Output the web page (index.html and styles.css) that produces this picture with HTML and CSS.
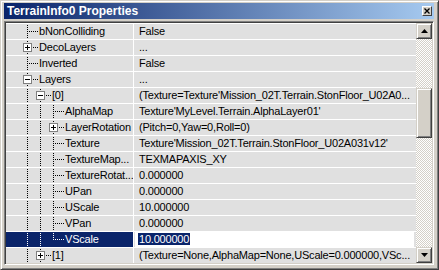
FILE: index.html
```html
<!DOCTYPE html>
<html lang="en">
<head>
    <meta charset="UTF-8">
    <title>TerrainInfo0 Properties</title>
    <link rel="stylesheet" href="styles.css">
</head>
<body>
    <div class="window">
        <div class="titlebar">
            <span class="title">TerrainInfo0 Properties</span>
            <span class="close"><svg width="6" height="6" viewBox="0 0 6 6"><path d="M0.5 0.5l5 5M5.5 0.5l-5 5" stroke="#000" stroke-width="1.3"/></svg></span>
        </div>
        <div class="frame">
            <div class="grid">
                <div class="row">
                    <div class="name"><span class="g conn tee"></span><span class="label">bNonColliding</span></div>
                    <div class="value">False</div>
                </div>
                <div class="row">
                    <div class="name"><span class="g conn tee"><span class="box plus"></span></span><span class="label">DecoLayers</span></div>
                    <div class="value">...</div>
                </div>
                <div class="row">
                    <div class="name"><span class="g conn tee"></span><span class="label">Inverted</span></div>
                    <div class="value">False</div>
                </div>
                <div class="row">
                    <div class="name"><span class="g conn tee"><span class="box"></span></span><span class="label">Layers</span></div>
                    <div class="value">...</div>
                </div>
                <div class="row">
                    <div class="name"><span class="g pipe"></span><span class="g conn tee"><span class="box"></span></span><span class="label">[0]</span></div>
                    <div class="value">(Texture=Texture'Mission_02T.Terrain.StonFloor_U02A0...</div>
                </div>
                <div class="row">
                    <div class="name"><span class="g pipe"></span><span class="g pipe"></span><span class="g conn tee"></span><span class="label">AlphaMap</span></div>
                    <div class="value">Texture'MyLevel.Terrain.AlphaLayer01'</div>
                </div>
                <div class="row">
                    <div class="name"><span class="g pipe"></span><span class="g pipe"></span><span class="g conn tee"><span class="box plus"></span></span><span class="label">LayerRotation</span></div>
                    <div class="value">(Pitch=0,Yaw=0,Roll=0)</div>
                </div>
                <div class="row">
                    <div class="name"><span class="g pipe"></span><span class="g pipe"></span><span class="g conn tee"></span><span class="label">Texture</span></div>
                    <div class="value">Texture'Mission_02T.Terrain.StonFloor_U02A031v12'</div>
                </div>
                <div class="row">
                    <div class="name"><span class="g pipe"></span><span class="g pipe"></span><span class="g conn tee"></span><span class="label">TextureMap...</span></div>
                    <div class="value">TEXMAPAXIS_XY</div>
                </div>
                <div class="row">
                    <div class="name"><span class="g pipe"></span><span class="g pipe"></span><span class="g conn tee"></span><span class="label">TextureRotat...</span></div>
                    <div class="value">0.000000</div>
                </div>
                <div class="row">
                    <div class="name"><span class="g pipe"></span><span class="g pipe"></span><span class="g conn tee"></span><span class="label">UPan</span></div>
                    <div class="value">0.000000</div>
                </div>
                <div class="row">
                    <div class="name"><span class="g pipe"></span><span class="g pipe"></span><span class="g conn tee"></span><span class="label">UScale</span></div>
                    <div class="value">10.000000</div>
                </div>
                <div class="row">
                    <div class="name"><span class="g pipe"></span><span class="g pipe"></span><span class="g conn tee"></span><span class="label">VPan</span></div>
                    <div class="value">0.000000</div>
                </div>
                <div class="row sel">
                    <div class="name"><span class="g pipe"></span><span class="g pipe"></span><span class="g conn end"></span><span class="label">VScale</span></div>
                    <div class="value"><span class="edit"><span class="hl">10.000000</span></span></div>
                </div>
                <div class="row">
                    <div class="name"><span class="g pipe"></span><span class="g conn tee"><span class="box plus"></span></span><span class="label">[1]</span></div>
                    <div class="value">(Texture=None,AlphaMap=None,UScale=0.000000,VSc...</div>
                </div>
            </div>
            <div class="scrollbar">
                <div class="sb-btn"><svg width="7" height="4" viewBox="0 0 7 4"><path d="M3.5 0L7 4H0z"/></svg></div>
                <div class="track top"></div>
                <div class="thumb"></div>
                <div class="track rest"></div>
                <div class="sb-btn"><svg width="7" height="4" viewBox="0 0 7 4"><path d="M0 0h7L3.5 4z"/></svg></div>
            </div>
        </div>
    </div>
</body>
</html>
```

FILE: styles.css
```css
body {
    margin: 0;
    background-color: #d4d0c8;
    font-family: "Liberation Sans", Arial, sans-serif;
    font-size: 11px;
    color: #000;
}
.window {
    width: 439px;
    height: 270px;
    box-sizing: border-box;
    border: 1px solid;
    border-color: #d4d0c8 #404040 #404040 #d4d0c8;
    box-shadow: inset 1px 1px #fff, inset -1px -1px #808080;
    padding: 2px 4px 4px 3px;
    background-color: #d4d0c8;
}
.titlebar {
    height: 16px;
    margin-bottom: 2px;
    padding-left: 3px;
    display: flex;
    align-items: center;
    background: linear-gradient(to right, #0a246a, #a6caf0);
}
.title {
    flex: 1;
    color: #fff;
    font-weight: bold;
    font-size: 12px;
    line-height: 16px;
    white-space: nowrap;
}
.close {
    width: 10px;
    height: 10px;
    box-sizing: border-box;
    margin-right: 2px;
    display: flex;
    align-items: center;
    justify-content: center;
    background-color: #d4d0c8;
    border: 1px solid;
    border-color: #fff #404040 #404040 #fff;
}
.frame {
    height: 244px;
    box-sizing: border-box;
    display: flex;
    padding: 1px;
    border: 1px solid;
    border-color: #808080 #fff #fff #808080;
    box-shadow: inset 1px 1px #404040, inset -1px -1px #d4d0c8;
}
.grid {
    width: 410px;
}
.row {
    display: flex;
    height: 16px;
    letter-spacing: -0.2px;
}
.name {
    --ln: #000;
    width: 128px;
    box-sizing: border-box;
    padding-left: 15px;
    display: flex;
    align-items: flex-start;
    border-top: 1px solid #fff;
    border-right: 1px solid #fff;
    background-color: #e0e0e0;
    white-space: nowrap;
    overflow: hidden;
}
.value {
    flex: 1;
    padding-left: 5px;
    line-height: 15px;
    border-top: 1px solid #fff;
    background-color: #e0e0e0;
    white-space: nowrap;
    overflow: hidden;
}
.label {
    line-height: 15px;
}

/* tree guides */
.g {
    display: block;
    flex: none;
    width: 13px;
    height: 16px;
    margin-top: -1px;
}
.g.conn {
    width: 18px;
}
.pipe {
    background: repeating-linear-gradient(var(--ln) 0 1px, transparent 1px 2px) 6px 0 / 1px 16px no-repeat;
}
.tee {
    background:
        repeating-linear-gradient(to right, var(--ln) 0 1px, transparent 1px 2px) 8px 8px / 9px 1px no-repeat,
        repeating-linear-gradient(var(--ln) 0 1px, transparent 1px 2px) 6px 0 / 1px 16px no-repeat;
}
.end {
    background:
        repeating-linear-gradient(to right, var(--ln) 0 1px, transparent 1px 2px) 8px 8px / 9px 1px no-repeat,
        repeating-linear-gradient(var(--ln) 0 1px, transparent 1px 2px) 6px 0 / 1px 9px no-repeat;
}
.box {
    display: block;
    width: 9px;
    height: 9px;
    box-sizing: border-box;
    margin: 4px 0 0 2px;
    border: 1px solid #808080;
    background: linear-gradient(#000, #000) center / 5px 1px no-repeat, #fff;
}
.box.plus {
    background:
        linear-gradient(#000, #000) center / 5px 1px no-repeat,
        linear-gradient(#000, #000) center / 1px 5px no-repeat,
        #fff;
}

/* selected row */
.row.sel .name {
    --ln: #fff;
    background-color: #0a246a;
    color: #fff;
}
.row.sel .value {
    padding: 0 2px 0 1px;
}
.edit {
    display: block;
    height: 15px;
    padding-left: 3px;
    background-color: #fff;
}
.hl {
    padding: 0 1px;
    background-color: #0a246a;
    color: #fff;
}

/* scrollbar */
.scrollbar {
    width: 16px;
    display: flex;
    flex-direction: column;
}
.sb-btn,
.thumb {
    box-sizing: border-box;
    border: 1px solid;
    border-color: #d4d0c8 #404040 #404040 #d4d0c8;
    box-shadow: inset 1px 1px #fff, inset -1px -1px #808080;
    background-color: #d4d0c8;
}
.sb-btn {
    height: 16px;
    display: flex;
    align-items: center;
    justify-content: center;
}
.thumb {
    height: 50px;
}
.track {
    background: repeating-conic-gradient(#fff 0 25%, #d4d0c8 0 50%) 0 0 / 2px 2px;
}
.track.top {
    height: 49px;
}
.track.rest {
    flex: 1;
}
```
